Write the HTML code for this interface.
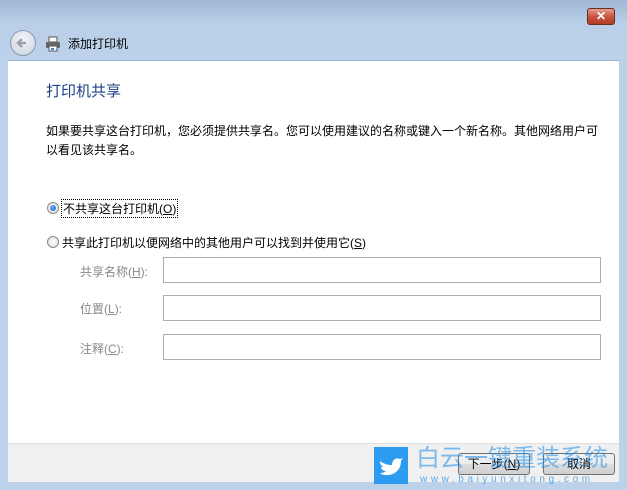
<!DOCTYPE html>
<html><head><meta charset="utf-8"><style>
*{margin:0;padding:0;box-sizing:border-box}
body{width:627px;height:490px;overflow:hidden;background:#bcd2ea;font-family:"Liberation Sans","Noto Sans CJK SC","WenQuanYi Zen Hei",sans-serif;font-size:12px;color:#000;position:relative}
.top{position:absolute;left:0;top:0;width:627px;height:60px;background:linear-gradient(#9fb8d6,#b9cfe8 40%,#bcd2ea)}
.close{position:absolute;left:587px;top:8px;width:28px;height:17px;border:1px solid #6b2a22;border-radius:3px;background:linear-gradient(#e3a08f,#c8553e 50%,#b23b25);color:#fff;font-weight:bold;font-size:12px;text-align:center;line-height:15px}
.back{position:absolute;left:10px;top:30px;width:26px;height:26px;border-radius:50%;border:1px solid #8a9bb0;background:radial-gradient(circle at 50% 35%,#f4f6f8,#c8d0da)}
.title{position:absolute;left:68px;top:35px;font-size:12px}
.content{position:absolute;left:8px;top:60px;width:611px;height:383px;background:#fff;border-top:1px solid #9cb3cf}
.footer{position:absolute;left:8px;top:443px;width:611px;height:39px;background:#f0f0f0;border-top:1px solid #dfdfdf}
.h{position:absolute;left:46px;top:80px;font-size:15px;color:#1e3f8a}
.p{position:absolute;left:46px;top:122px;width:560px;line-height:19px}
.r{position:absolute;width:12px;height:12px;border-radius:50%;border:1px solid #8a8a8a;background:radial-gradient(#fff,#dcdcdc)}
.r.on::after{content:"";position:absolute;left:2px;top:2px;width:6px;height:6px;border-radius:50%;background:radial-gradient(circle at 40% 35%,#6fb0f0,#1b5fb8)}
.lbl{position:absolute;color:#888}
.in{position:absolute;left:163px;width:438px;height:26px;border:1px solid #abadb3;background:#fff}
.btn{position:absolute;top:453px;width:72px;height:22px;border:1px solid #707070;border-radius:3px;background:linear-gradient(#f2f2f2,#ebebeb 50%,#dddddd 51%,#cfcfcf);text-align:center;line-height:20px}
.wm{position:absolute;left:374px;top:447px;width:34px;height:37px;background:#2d9cf0}
.wmt{position:absolute;left:416px;top:446px;font-size:24px;line-height:26px;color:rgba(30,140,235,.55);letter-spacing:0;white-space:nowrap}
.wmu{position:absolute;left:420px;top:474px;width:200px;overflow:hidden;font-size:10px;line-height:11px;color:rgba(30,140,235,.7);letter-spacing:3.6px;white-space:nowrap}
</style></head><body>
<div class="top"></div>
<div class="close">✕</div>
<div class="back"><svg width="24" height="24" viewBox="0 0 24 24"><path d="M15 12H8M11 8l-4 4 4 4" stroke="#9aa3ad" stroke-width="2.5" fill="none"/></svg></div>
<svg style="position:absolute;left:44px;top:35px" width="18" height="18" viewBox="0 0 18 18"><rect x="5" y="2" width="8" height="5" fill="#fff" stroke="#555"/><rect x="2" y="7" width="14" height="6" rx="1" fill="#666"/><rect x="5" y="11" width="8" height="5" fill="#fff" stroke="#555"/><rect x="7" y="13" width="3" height="2" fill="#2d8ad8"/></svg>
<div class="title">添加打印机</div>
<div class="content"></div>
<div class="footer"></div>
<div class="h">打印机共享</div>
<div class="p">如果要共享这台打印机，您必须提供共享名。您可以使用建议的名称或键入一个新名称。其他网络用户可以看见该共享名。</div>
<div class="r on" style="left:47px;top:202px"></div>
<div style="position:absolute;left:61px;top:199px;border:1px dotted #000;padding:0 1px">不共享这台打印机(<u>O</u>)</div>
<div class="r" style="left:47px;top:236px"></div>
<div style="position:absolute;left:62px;top:234px">共享此打印机以便网络中的其他用户可以找到并使用它(<u>S</u>)</div>
<div class="lbl" style="left:80px;top:263px">共享名称(<u>H</u>):</div>
<div class="in" style="top:257px"></div>
<div class="lbl" style="left:80px;top:300px">位置(<u>L</u>):</div>
<div class="in" style="top:295px"></div>
<div class="lbl" style="left:80px;top:340px">注释(<u>C</u>):</div>
<div class="in" style="top:334px"></div>
<div class="btn" style="left:458px">下一步(<u>N</u>)</div>
<div class="btn" style="left:543px">取消</div>
<div class="wm"><svg width="34" height="37" viewBox="0 0 34 37"><path d="M6 14c4 3 8 4 12 4 0-5 4-8 8-6l3-1-2 3c0 9-7 15-16 14-2 0-4-1-5-2 3 0 5-1 6-2-3 0-5-2-5-4 1 0 2 0 3 0-3-1-4-3-4-6z" fill="#fff"/></svg></div>
<div class="wmt">白云一键重装系统</div>
<div class="wmu">www.baiyunxitong.com</div>
</body></html>
